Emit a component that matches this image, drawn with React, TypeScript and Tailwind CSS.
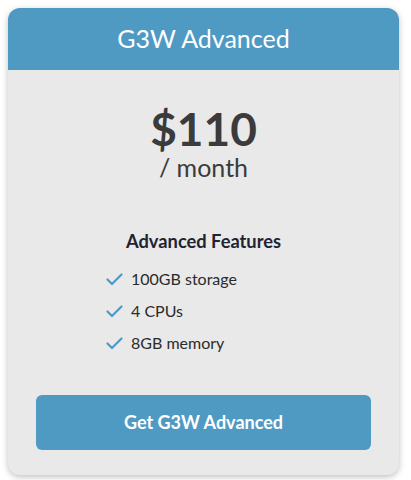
import React from "react";

function CheckIcon() {
  return (
    <svg width="17" height="13" viewBox="0 0 17 13" fill="none" className="shrink-0">
      <path d="M1.5 6.5 L6 11 L15.5 1.5" stroke="#4f9ac3" strokeWidth="2.2" strokeLinecap="round" strokeLinejoin="round" />
    </svg>
  );
}

export default function App() {
  const features = ["100GB storage", "4 CPUs", "8GB memory"];
  return (
    <div className="w-[411px] h-[480px] bg-white pt-2 px-2" style={{ fontFamily: "Lato, 'Open Sans', sans-serif" }}>
      <div className="w-[391px] h-[467px] rounded-xl bg-[#e9e9e9] overflow-hidden shadow-[0_2px_6px_rgba(0,0,0,0.25)] flex flex-col">
        <div className="h-[62px] bg-[#4f9ac3] flex items-center justify-center text-white text-[25px]">
          G3W Advanced
        </div>
        <div className="flex flex-col items-center mt-[36px]">
          <div className="text-[46px] leading-none font-bold text-[#3b3b3b]">$110</div>
          <div className="text-[25px] leading-none text-[#3b3b3b] mt-[3px]">/ month</div>
        </div>
        <div className="mt-[52px] text-center text-[18.3px] leading-none font-bold text-[#1f2433]">Advanced Features</div>
        <ul className="mt-[13px] pl-[98px]">
          {features.map((f) => (
            <li key={f} className="flex items-center gap-[8px] h-[32px] text-[16px] text-[#2b2b2b]">
              <CheckIcon />
              <span>{f}</span>
            </li>
          ))}
        </ul>
        <div className="px-[28px] mt-[36px]">
          <button className="w-full h-[55px] rounded-md bg-[#4f9ac3] text-white text-[18px] font-bold">
            Get G3W Advanced
          </button>
        </div>
      </div>
    </div>
  );
}
